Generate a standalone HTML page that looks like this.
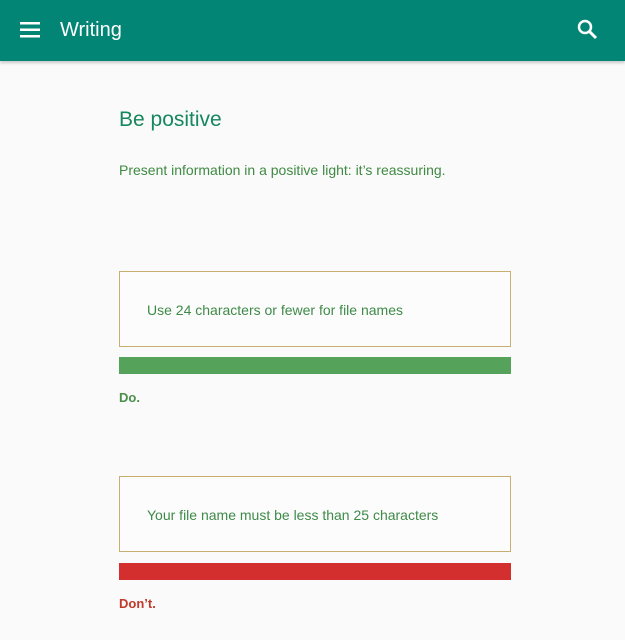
<!DOCTYPE html>
<html><head><style>
body{margin:0;width:625px;height:640px;background:#fafafa;font-family:"Liberation Sans",sans-serif;position:relative;overflow:hidden}
.hdr{position:absolute;left:0;top:0;width:625px;height:61px;background:#038575;box-shadow:0 2px 3px rgba(0,0,0,.2)}
.title{position:absolute;left:60px;top:19px;color:#fff;font-size:20px}
.a{position:absolute}
h1{position:absolute;left:119px;top:108px;margin:0;font-weight:normal;font-size:21px;color:#16875f}
.p{left:119px;top:162px;font-size:14px;color:#3f8a43}
.box{position:absolute;left:119px;width:390px;height:74px;border:1px solid #c9ae72;background:#fcfcfc}
.box span{position:absolute;left:27px;top:30px;font-size:14px;color:#3e8a48}
.bar{position:absolute;left:119px;width:392px;height:17px}
.lab{position:absolute;left:119px;font-size:13px;font-weight:bold}
</style></head><body>
<div class="hdr">
<svg class="a" style="left:20px;top:21px" width="20" height="18"><rect y="1" width="20" height="2.5" fill="#fff"/><rect y="7.5" width="20" height="2.5" fill="#fff"/><rect y="14" width="20" height="2.5" fill="#fff"/></svg>
<div class="title">Writing</div>
<svg class="a" style="left:577px;top:19px" width="22" height="22"><circle cx="8" cy="8" r="6" stroke="#fff" stroke-width="2.5" fill="none"/><path d="M12.5 12.5L19 19" stroke="#fff" stroke-width="3"/></svg>
</div>
<h1>Be positive</h1>
<div class="a p">Present information in a positive light: it’s reassuring.</div>
<div class="box" style="top:271px"><span>Use 24 characters or fewer for file names</span></div>
<div class="bar" style="top:357px;background:#55a35a"></div>
<div class="lab" style="top:390px;color:#4a8f4a">Do.</div>
<div class="box" style="top:476px"><span>Your file name must be less than 25 characters</span></div>
<div class="bar" style="top:563px;background:#d32f2f"></div>
<div class="lab" style="top:596px;color:#c0392b">Don’t.</div>
</body></html>
